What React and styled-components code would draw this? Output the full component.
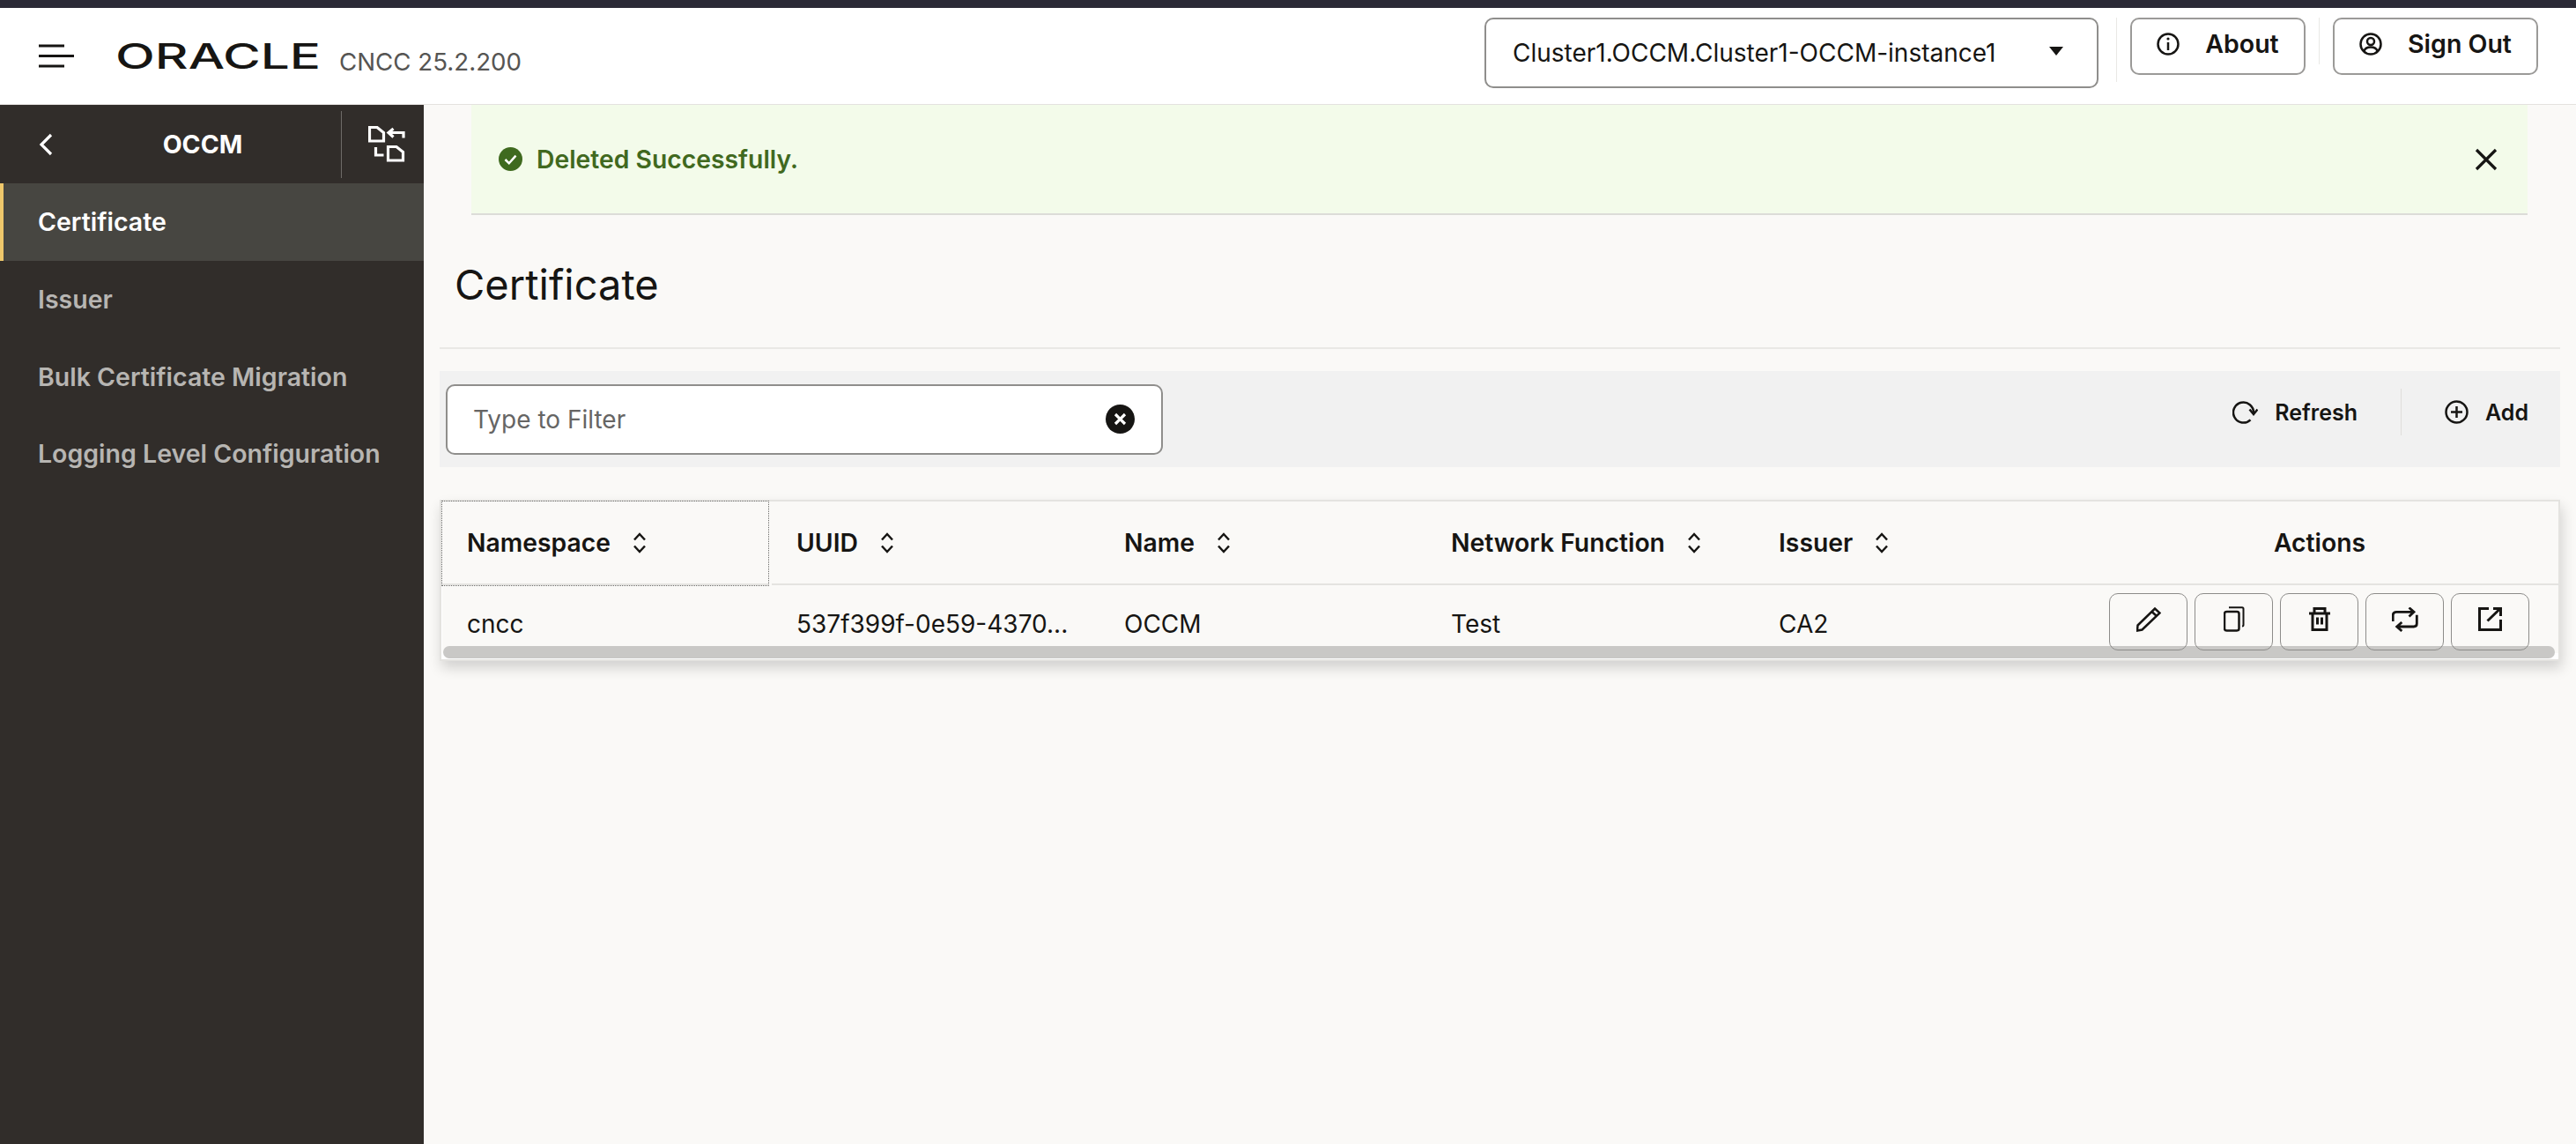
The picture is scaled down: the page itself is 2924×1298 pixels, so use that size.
import React from 'react';
import styled, { createGlobalStyle } from 'styled-components';

const GlobalStyle = createGlobalStyle`
  html, body {
    margin: 0;
    padding: 0;
    background: #faf9f7;
    font-family: Inter, "Noto Sans", sans-serif;
    color: #161513;
  }
`;

const Page = styled.div`
  width: 2924px;
  height: 1298px;
  display: flex;
  flex-direction: column;
  overflow: hidden;
`;

const TopStrip = styled.div`
  height: 9px;
  background: #2b2a36;
`;

const Header = styled.header`
  height: 109px;
  box-sizing: content-box;
  border-bottom: 1px solid #e4e2df;
  background: #fff;
  display: flex;
  align-items: flex-start;
`;

const Brand = styled.div`
  display: flex;
  align-items: center;
  height: 100%;
  padding-left: 44px;
  flex: 1;
`;

const BrandLogo = styled.svg`
  margin-left: 46px;
  margin-top: 1px;
  overflow: visible;
`;

const Version = styled.span`
  margin-left: 21px;
  margin-top: 12px;
  font-size: 27.7px;
  color: #565553;
`;

const HeaderActions = styled.div`
  display: flex;
  align-items: flex-start;
  padding: 11px 43px 0 0;
`;

const ClusterSelect = styled.div`
  width: 697px;
  height: 80px;
  box-sizing: border-box;
  border: 2px solid #8f8e8c;
  border-radius: 10px;
  display: flex;
  align-items: center;
  justify-content: space-between;
  padding: 0 38px 0 30px;
  font-size: 28px;
  background: #fff;
`;

const CaretDown = styled.span`
  width: 0;
  height: 0;
  margin-bottom: 4px;
  border-left: 8px solid transparent;
  border-right: 8px solid transparent;
  border-top: 10px solid #161513;
`;

const HeaderDivider = styled.span`
  width: 1px;
  height: ${(p) => p.$height}px;
  background: #e9e8e5;
  margin: 0 ${(p) => p.$right}px 0 ${(p) => p.$left}px;
`;

const HeaderButton = styled.button`
  width: ${(p) => p.$width}px;
  height: 65px;
  box-sizing: border-box;
  border: 2px solid #9b9a98;
  border-radius: 10px;
  background: #fff;
  display: flex;
  align-items: center;
  justify-content: center;
  gap: 29px;
  padding: 0 0 6px;
  font: 600 28.5px Inter, sans-serif;
  color: #161513;
`;

const Body = styled.div`
  flex: 1;
  display: flex;
  min-height: 0;
`;

const Sidebar = styled.nav`
  width: 481px;
  flex: none;
  background: #312d2a;
`;

const SideHead = styled.div`
  height: 89px;
  display: flex;
  align-items: center;
  padding-left: 44px;
  color: #fff;
`;

const SideTitle = styled.div`
  width: 327px;
  box-sizing: border-box;
  padding-left: 13px;
  text-align: center;
  font-size: 28.5px;
  font-weight: 700;
`;

const SideDivider = styled.span`
  width: 1px;
  height: 76px;
  background: #6e6b68;
  margin-right: 30px;
`;

const NavItem = styled.div`
  height: 87.7px;
  box-sizing: border-box;
  display: flex;
  align-items: center;
  padding-left: ${(p) => (p.$active ? 39 : 43)}px;
  font-size: 28.5px;
  font-weight: 600;
  color: ${(p) => (p.$active ? '#fff' : '#b7b5b2')};
  background: ${(p) => (p.$active ? '#474641' : 'transparent')};
  border-left: ${(p) => (p.$active ? '4px solid #eec76b' : 'none')};
`;

const Main = styled.main`
  flex: 1;
  min-width: 0;
  padding: 0 18px;
  display: flex;
  flex-direction: column;
  background: #faf9f7;
`;

const Banner = styled.div`
  height: 125px;
  box-sizing: border-box;
  margin: 0 37px 0 36px;
  background: #f3fbea;
  border-bottom: 2px solid #dcdcd8;
  display: flex;
  align-items: center;
  padding: 0 34px 0 31px;
`;

const BannerText = styled.span`
  flex: 1;
  margin-left: 16px;
  font-size: 28.3px;
  font-weight: 600;
  color: #41691f;
`;

const TitleBlock = styled.div`
  height: 152px;
  box-sizing: border-box;
  padding: 6px 0 0 17px;
  display: flex;
  align-items: center;
  border-bottom: 2px solid #e9e8e5;
`;

const Title = styled.h1`
  margin: 0;
  font-size: 47px;
  font-weight: 400;
  color: #161513;
`;

const Toolbar = styled.div`
  height: 109px;
  margin-top: 25px;
  background: #f1f1f1;
  display: flex;
  align-items: center;
  padding: 0 36px 0 7px;
`;

const FilterBox = styled.div`
  width: 814px;
  height: 80px;
  box-sizing: border-box;
  border: 2px solid #8f8e8c;
  border-radius: 10px;
  background: #fff;
  display: flex;
  align-items: center;
  justify-content: space-between;
  padding: 0 30px 0 29px;
  font-size: 28px;
  color: #666564;
`;

const ToolbarActions = styled.div`
  margin-left: auto;
  padding-bottom: 16px;
  display: flex;
  align-items: center;
  font: 600 25px Inter, sans-serif;
  color: #161513;
`;

const ToolAction = styled.span`
  display: flex;
  align-items: center;
  gap: 19px;
`;

const ToolDivider = styled.span`
  width: 1px;
  height: 53px;
  background: #dfdedb;
  margin: 0 49px;
`;

const TableCard = styled.section`
  position: relative;
  margin-top: 37px;
  height: 183px;
  box-sizing: border-box;
  border: 2px solid #e4e3e0;
  background: #fff;
  box-shadow: 2px 8px 14px rgba(0, 0, 0, 0.16);
`;

const TableGrid = styled.div`
  display: grid;
  grid-template-columns: 374px 372px 371px 372px 371px 1fr;
  grid-template-rows: 95px 77px;
  margin-left: 1px;
  background: #faf9f7;
`;

const HeadCell = styled.div`
  display: flex;
  align-items: center;
  justify-content: ${(p) => (p.$centered ? 'center' : 'flex-start')};
  gap: 24px;
  padding-left: ${(p) => (p.$centered ? 0 : 28)}px;
  margin-right: ${(p) => (p.$focused ? 4 : 0)}px;
  font-size: 28.3px;
  font-weight: 600;
  outline: ${(p) => (p.$focused ? '1px dotted #6a6a68' : 'none')};
  border-bottom: 2px solid #e4e3e0;
`;

const Cell = styled.div`
  padding: 27px 0 0 28px;
  font-size: 28px;
  font-weight: 400;
  color: #161513;
`;

const RowActions = styled.div`
  display: flex;
  justify-content: flex-end;
  gap: 8px;
  padding: 9px 33px 0 0;
  position: relative;
  z-index: 2;
`;

const IconButton = styled.button`
  width: 89px;
  height: 65px;
  box-sizing: border-box;
  padding: 0 0 6px;
  border: 1.5px solid #8d8c8a;
  border-radius: 10px;
  background: transparent;
  display: flex;
  align-items: center;
  justify-content: center;
`;

const ScrollThumb = styled.div`
  position: absolute;
  left: 2px;
  right: 4px;
  bottom: 1px;
  height: 14px;
  border-radius: 7px;
  background: #c9c8c6;
`;

const ln = {
  fill: 'none',
  stroke: '#161513',
  strokeWidth: 2.5,
};

const wh = { fill: 'none', stroke: '#fff', strokeWidth: 3.2 };

const BurgerIcon = () => (
  <svg width="42" height="28" viewBox="0 0 42 28">
    <path d="M0 2h29M0 13.5h40M0 25h29" {...ln} strokeWidth="3" />
  </svg>
);

const OracleLogo = () => (
  <BrandLogo width="232" height="30" viewBox="0 0 232 30">
    <text
      x="-1"
      y="29"
      textLength="233"
      lengthAdjust="spacingAndGlyphs"
      fontFamily="Inter, sans-serif"
      fontWeight="500"
      fontSize="39"
      fill="#161513"
    >
      ORACLE
    </text>
  </BrandLogo>
);

const InfoIcon = () => (
  <svg width="26" height="26" viewBox="0 0 26 26">
    <circle cx="13" cy="13" r="11.5" {...ln} />
    <path d="M13 11v9" {...ln} />
    <circle cx="13" cy="7" r="1.6" fill="#161513" />
  </svg>
);

const UserIcon = () => (
  <svg width="26" height="26" viewBox="0 0 26 26">
    <circle cx="13" cy="13" r="11.5" {...ln} />
    <circle cx="13" cy="10" r="4" {...ln} />
    <path d="M5.5 21c1-3.5 4-4.5 7.5-4.5s6.5 1 7.5 4.5" {...ln} />
  </svg>
);

const BackIcon = () => (
  <svg width="16" height="26" viewBox="0 0 16 26">
    <path d="M14 2L3 13l11 11" {...wh} />
  </svg>
);

const MigrateIcon = () => (
  <svg width="42" height="42" viewBox="0 0 42 42">
    <path d="M1.5 1.5h8.5l7.5 6v9.5h-16z" {...wh} />
    <path d="M22.5 23.5h9.5l7.5 6v9.5h-17z" {...wh} />
    <path d="M40 13.5v-6H23M28.5 3L23 7.5l5.5 5" {...wh} />
    <path d="M8.5 24v9h9" {...wh} />
  </svg>
);

const SuccessIcon = () => (
  <svg width="27" height="27" viewBox="0 0 27 27">
    <circle cx="13.5" cy="13.5" r="13.5" fill="#3f6a1f" />
    <path d="M7.5 14l4.3 4.3 7.7-8.6" fill="none" stroke="#fff" strokeWidth="2.5" />
  </svg>
);

const CloseIcon = () => (
  <svg width="26" height="26" viewBox="0 0 26 26">
    <path d="M2 2l22 22M24 2L2 24" fill="none" stroke="#161513" strokeWidth="3.2" />
  </svg>
);

const ClearIcon = () => (
  <svg width="33" height="33" viewBox="0 0 33 33">
    <circle cx="16.5" cy="16.5" r="16.5" fill="#161513" />
    <path d="M11 11l11 11M22 11L11 22" fill="none" stroke="#fff" strokeWidth="3.2" />
  </svg>
);

const RefreshIcon = () => (
  <svg width="29" height="26" viewBox="0 0 29 26">
    <path d="M20.5 21.3A11.5 11.5 0 1 1 24 13.5" {...ln} />
    <path d="M19.5 9.5l4.5 5.5 4.5-5.5" {...ln} />
  </svg>
);

const PlusIcon = () => (
  <svg width="27" height="27" viewBox="0 0 27 27">
    <circle cx="13.5" cy="13.5" r="12" {...ln} />
    <path d="M13.5 7v13M7 13.5h13" {...ln} />
  </svg>
);

const SortIcon = () => (
  <svg width="18" height="24" viewBox="0 0 18 24">
    <path d="M3 8.5L9 2l6 6.5M3 15.5L9 22l6-6.5" {...ln} />
  </svg>
);

const PencilIcon = () => (
  <svg width="28" height="28" viewBox="0 0 28 28">
    <path d="M1.5 20.5L21 1.5l5.5 5L6.5 25.5l-5.5 1zM17.5 5l5.5 5" {...ln} />
  </svg>
);

const CopyIcon = () => (
  <svg width="24" height="29" viewBox="0 0 24 29">
    <rect x="1" y="6" width="16.5" height="21.5" rx="2.5" {...ln} />
    <path d="M6 1.2h15q1.5 0 1.5 1.5V21q0 1.5-1.5 1.5" {...ln} strokeWidth="2" />
  </svg>
);

const TrashIcon = () => (
  <svg width="24" height="27" viewBox="0 0 24 27">
    <path d="M0 7h24M6 7V1.5h12V7M4 7v18.5h16V7M9.5 11.5v8M14.5 11.5v8" {...ln} strokeWidth="3" />
  </svg>
);

const RepeatIcon = () => (
  <svg width="30" height="28" viewBox="0 0 30 28">
    <path d="M1.2 16V9.5q0-4.2 4-4.2H25M19.5 .5l5.5 4.8-5.5 5.2" {...ln} strokeWidth="2.8" />
    <path d="M28.3 8.7v9.8q0 3.5-3.5 3.5H5.7M11.3 17l-5.6 5 5.6 5" {...ln} strokeWidth="2.8" />
  </svg>
);

const ExternalIcon = () => (
  <svg width="27" height="27" viewBox="0 0 27 27">
    <path d="M12 1.5H1.5V25.5H25.5V14" {...ln} strokeWidth="3" />
    <path d="M10.5 15.5L25 1.5M17 1.5h8.5V10" {...ln} strokeWidth="3" />
  </svg>
);

const columns = ['Namespace', 'UUID', 'Name', 'Network Function', 'Issuer'];
const row = ['cncc', '537f399f-0e59-4370...', 'OCCM', 'Test', 'CA2'];
const navItems = ['Certificate', 'Issuer', 'Bulk Certificate Migration', 'Logging Level Configuration'];

const App = () => (
  <Page>
    <GlobalStyle />
    <TopStrip />
    <Header>
      <Brand>
        <BurgerIcon />
        <OracleLogo />
        <Version>CNCC 25.2.200</Version>
      </Brand>
      <HeaderActions>
        <ClusterSelect>
          Cluster1.OCCM.Cluster1-OCCM-instance1
          <CaretDown />
        </ClusterSelect>
        <HeaderDivider $height={73} $left={20} $right={15} />
        <HeaderButton $width={199}>
          <InfoIcon />
          About
        </HeaderButton>
        <HeaderDivider $height={53} $left={15} $right={15} />
        <HeaderButton $width={233}>
          <UserIcon />
          Sign Out
        </HeaderButton>
      </HeaderActions>
    </Header>
    <Body>
      <Sidebar>
        <SideHead>
          <BackIcon />
          <SideTitle>OCCM</SideTitle>
          <SideDivider />
          <MigrateIcon />
        </SideHead>
        {navItems.map((item, i) => (
          <NavItem key={item} $active={i === 0}>
            {item}
          </NavItem>
        ))}
      </Sidebar>
      <Main>
        <Banner>
          <SuccessIcon />
          <BannerText>Deleted Successfully.</BannerText>
          <CloseIcon />
        </Banner>
        <TitleBlock>
          <Title>Certificate</Title>
        </TitleBlock>
        <Toolbar>
          <FilterBox>
            Type to Filter
            <ClearIcon />
          </FilterBox>
          <ToolbarActions>
            <ToolAction>
              <RefreshIcon />
              Refresh
            </ToolAction>
            <ToolDivider />
            <ToolAction>
              <PlusIcon />
              Add
            </ToolAction>
          </ToolbarActions>
        </Toolbar>
        <TableCard>
          <TableGrid>
            {columns.map((col, i) => (
              <HeadCell key={col} $focused={i === 0}>
                {col}
                <SortIcon />
              </HeadCell>
            ))}
            <HeadCell $centered>Actions</HeadCell>
            {row.map((value) => (
              <Cell key={value}>{value}</Cell>
            ))}
            <RowActions>
              <IconButton><PencilIcon /></IconButton>
              <IconButton><CopyIcon /></IconButton>
              <IconButton><TrashIcon /></IconButton>
              <IconButton><RepeatIcon /></IconButton>
              <IconButton><ExternalIcon /></IconButton>
            </RowActions>
          </TableGrid>
          <ScrollThumb />
        </TableCard>
      </Main>
    </Body>
  </Page>
);

export default App;
